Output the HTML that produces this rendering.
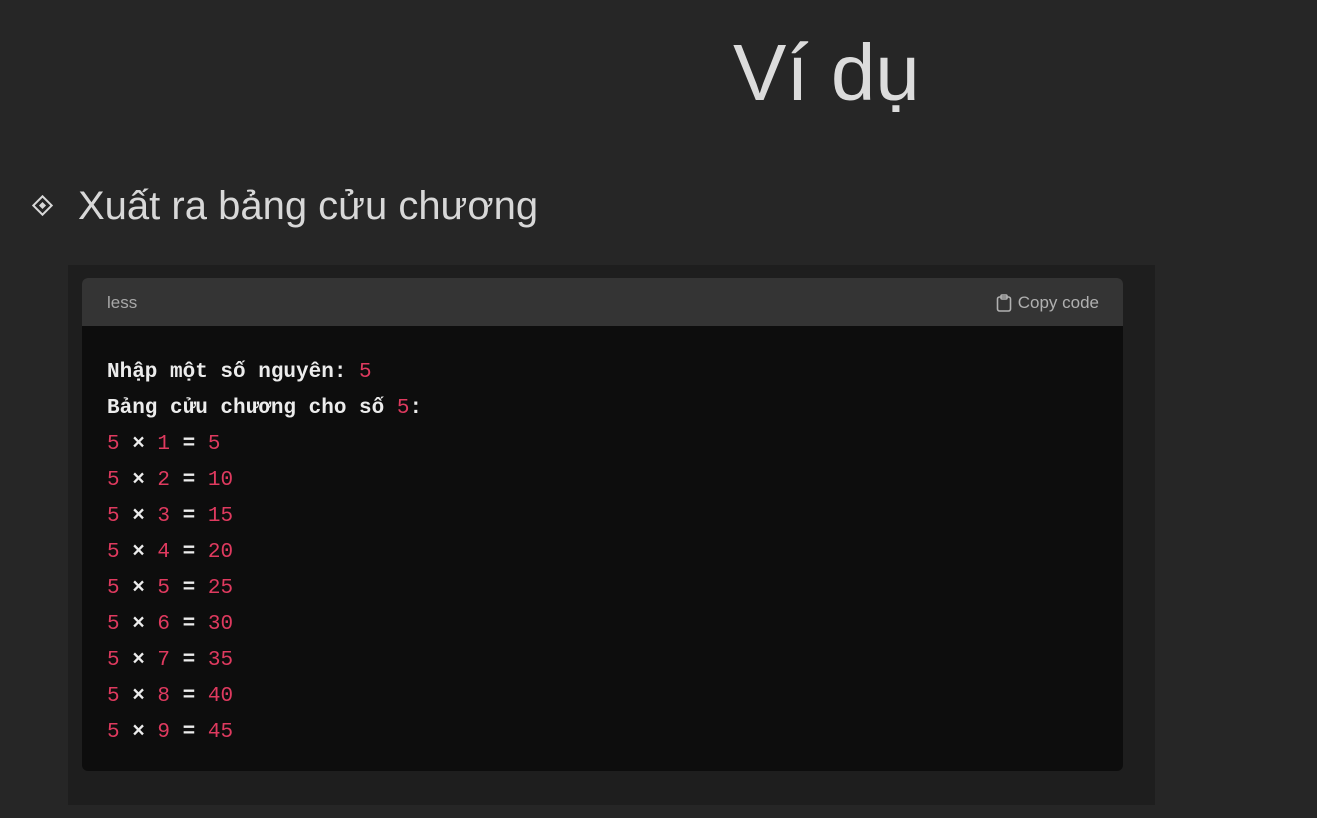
<!DOCTYPE html>
<html><head><meta charset="utf-8"><style>
html,body{margin:0;padding:0}
body{width:1317px;height:818px;background:#262626;position:relative;overflow:hidden;font-family:"Liberation Sans",sans-serif}
.title{position:absolute;left:733px;top:28px;font-size:80px;color:#dcdcdc;line-height:90px}
.bullet{position:absolute;left:78px;top:181px;font-size:40px;color:#d8d8d8;line-height:50px}
.dia{position:absolute;left:35px;top:198px;width:11px;height:11px;border:2px solid #d8d8d8;transform:rotate(45deg)}
.dia:after{content:"";position:absolute;left:3px;top:3px;width:5px;height:5px;background:#d8d8d8}
.outer{position:absolute;left:68px;top:265px;width:1087px;height:540px;background:#1e1e1e}
.block{position:absolute;left:82px;top:278px;width:1041px;height:493px;background:#0d0d0d;border-radius:6px;overflow:hidden}
.hdr{height:48px;background:#343434;color:#a8a8a8;font-size:17px;line-height:50px;padding-left:25px;position:relative}
.copy{position:absolute;right:24px;top:0;color:#b0b0b0}
.copy svg{vertical-align:-4px;margin-right:6px}
pre{margin:0;position:absolute;left:25px;top:77px;font-family:"Liberation Mono",monospace;font-size:21px;line-height:36px;color:#ececec;font-weight:bold}
.n{color:#df3a5f;font-weight:normal}
</style></head><body>
<div class="title">Ví dụ</div>
<div class="dia"></div>
<div class="bullet">Xuất ra bảng cửu chương</div>
<div class="outer"></div>
<div class="block">
<div class="hdr">less<span class="copy"><svg width="16" height="18" viewBox="0 0 16 18" fill="none" stroke="#b0b0b0" stroke-width="1.6"><rect x="1.5" y="3" width="13" height="14" rx="2"/><rect x="5" y="1" width="6" height="4" rx="1"/></svg>Copy code</span></div>
<pre>Nhập một số nguyên: <span class="n">5</span>
Bảng cửu chương cho số <span class="n">5</span>:
<span class="n">5</span> × <span class="n">1</span> = <span class="n">5</span>
<span class="n">5</span> × <span class="n">2</span> = <span class="n">10</span>
<span class="n">5</span> × <span class="n">3</span> = <span class="n">15</span>
<span class="n">5</span> × <span class="n">4</span> = <span class="n">20</span>
<span class="n">5</span> × <span class="n">5</span> = <span class="n">25</span>
<span class="n">5</span> × <span class="n">6</span> = <span class="n">30</span>
<span class="n">5</span> × <span class="n">7</span> = <span class="n">35</span>
<span class="n">5</span> × <span class="n">8</span> = <span class="n">40</span>
<span class="n">5</span> × <span class="n">9</span> = <span class="n">45</span></pre>
</div>
</body></html>
